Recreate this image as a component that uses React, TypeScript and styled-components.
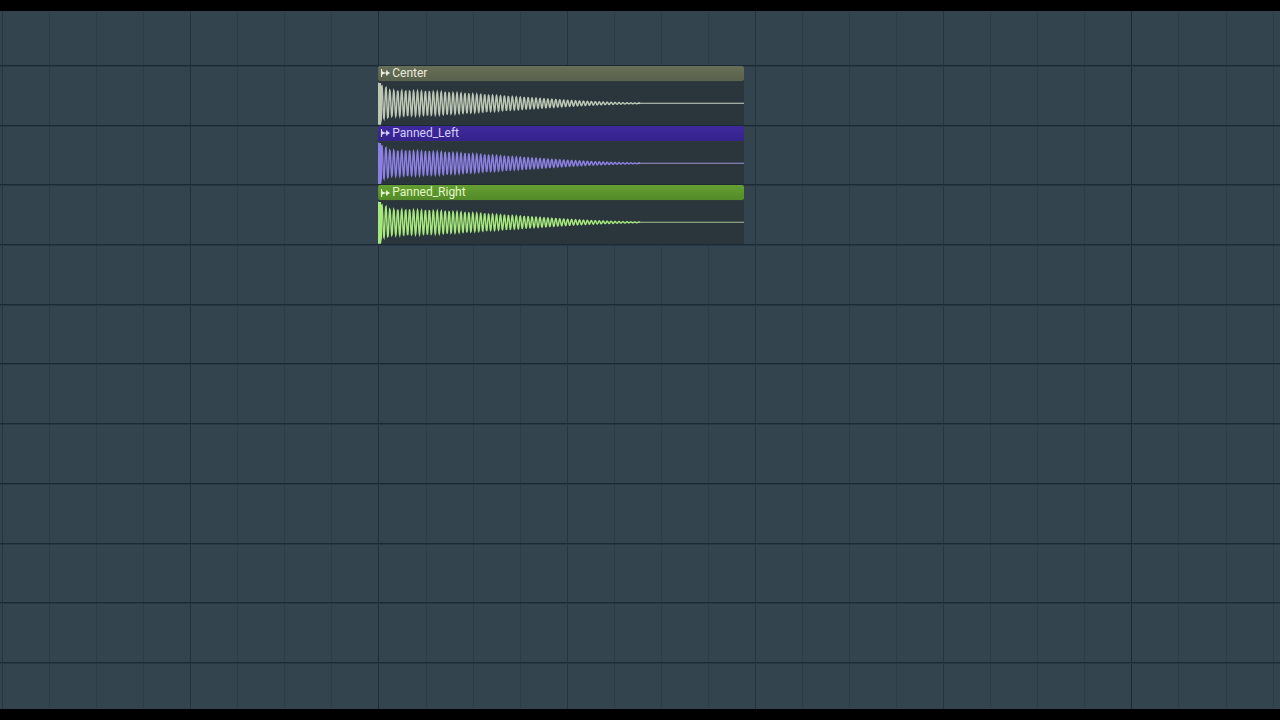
import React from "react";
import styled, { createGlobalStyle } from "styled-components";

const GlobalStyle = createGlobalStyle`
  *, *::before, *::after { box-sizing: border-box; }
  body { margin: 0; background: #000; font-family: Roboto, "Liberation Sans", sans-serif; }
`;

const Playlist = styled.main`
  display: grid;
  min-height: 100vh;
  padding: 11px 0;
  overflow: hidden;
  & > * { grid-area: 1 / 1; }
`;

const BarLines = styled.div`
  display: flex;
  min-width: 0;
  overflow: hidden;
  padding-left: 2px;
  background: #34444e;
`;

const Bar = styled.div`
  flex: 0 0 14.73%;
  display: flex;
`;

const Beat = styled.div<{ $tone: string }>`
  flex: 1;
  border-left: 1px solid ${(p) => p.$tone};
`;

const Tracks = styled.div`
  display: flex;
  flex-direction: column;
  min-width: 0;
`;

const Track = styled.section<{ $grow: number }>`
  display: flex;
  flex-direction: column;
  flex: ${(p) => p.$grow} 1 0;
  min-height: 0;
  border-bottom: 1px solid #1b2a33;
  box-shadow: 0 1px 0 #293842;
  padding-left: 29.55%;
  &:last-child {
    border-bottom: 0;
    box-shadow: none;
  }
`;

const Clip = styled.article`
  display: flex;
  flex-direction: column;
  flex: 1;
  min-height: 0;
  width: 40.6%;
  background: #2a353c;
`;

const ClipHeader = styled.header<{ $from: string; $to: string; $ink: string }>`
  display: flex;
  align-items: center;
  gap: 2px;
  height: 16px;
  padding-left: 2px;
  border-radius: 2px;
  border-bottom: 1px solid #2f3a3a;
  background: linear-gradient(${(p) => p.$from}, ${(p) => p.$to}) padding-box;
  color: ${(p) => p.$ink};
`;

const ClipName = styled.h2`
  margin: 0;
  font-size: 12px;
  font-weight: 400;
  line-height: 15px;
`;

const Wave = styled.svg`
  display: block;
  flex: 1;
  width: 100%;
  min-height: 0;
`;

type ClipData = { name: string; from: string; to: string; ink: string; wave: string; tail: string };

const clips: ClipData[] = [
  { name: "Center", from: "#686f58", to: "#58614c", ink: "#e9ecdf", wave: "#bcc8b4", tail: "#cbd4c8" },
  { name: "Panned_Left", from: "#3e2a9c", to: "#35228c", ink: "#d6d0fa", wave: "#8d80e4", tail: "#9a94cf" },
  { name: "Panned_Right", from: "#659f32", to: "#528b28", ink: "#e3f6c8", wave: "#a6e87c", tail: "#a5c190" },
];

const envelope: [number, number][] = [
  [0, 21], [3, 20], [5, 15], [8, 16], [12, 13], [60, 11.5], [100, 9],
  [130, 7], [160, 5], [190, 3], [220, 1.5], [250, 0.5], [280, 0], [366, 0],
];

const amplitudeAt = (x: number) => {
  const i = Math.max(1, envelope.findIndex(([px]) => px >= x));
  const [x0, a0] = envelope[i - 1];
  const [x1, a1] = envelope[i];
  return a0 + ((a1 - a0) * (x - x0)) / (x1 - x0);
};

const wavePath = () => {
  const points: string[] = [];
  for (let x = 0; x <= 262; x += 0.25) {
    const y = 21.5 - amplitudeAt(x) * Math.cos((x / 3.95) * Math.PI * 2);
    points.push(`${x.toFixed(2)} ${y.toFixed(2)}`);
  }
  return `M${points.join("L")}`;
};

const WAVE = wavePath();

const ClipIcon = () => (
  <svg width="10" height="10" viewBox="0 0 10 10" aria-hidden="true">
    <path d="M1.5 1v8M1 5h8.5M6.8 2.4v5.2" stroke="currentColor" strokeWidth="1.2" fill="none" />
    <path d="M1 2.5L5 5 1 7.5zM6.3 2.4L9.8 5 6.3 7.6z" fill="currentColor" />
  </svg>
);

const AudioClip = ({ clip }: { clip: ClipData }) => (
  <Clip>
    <ClipHeader $from={clip.from} $to={clip.to} $ink={clip.ink}>
      <ClipIcon />
      <ClipName>{clip.name}</ClipName>
    </ClipHeader>
    <Wave viewBox="0 0 366 43" preserveAspectRatio="none" aria-hidden="true">
      <path d="M0 1h3l1 18v18l-1 6H0z" fill={clip.wave} />
      <path d={WAVE} fill="none" stroke={clip.wave} strokeWidth="1.5" />
      <path d="M260 21.5H366" stroke={clip.tail} strokeWidth="1" shapeRendering="crispEdges" />
    </Wave>
  </Clip>
);

const trackSizes = [55, 60, 60, 60, 60, 60, 60, 60, 60, 60, 60, 47];
const barTones = ["#26353f", "#22313b", "#1f2e38", "#26353f", "#26353f", "#26353f", "#1b2a34"];

export default function App() {
  return (
    <>
      <GlobalStyle />
      <Playlist>
        <BarLines aria-hidden="true">
          {barTones.map((tone, i) => (
            <Bar key={i}>
              <Beat $tone={tone} />
              <Beat $tone="#2d3c46" />
              <Beat $tone="#2d3c46" />
              <Beat $tone="#2d3c46" />
            </Bar>
          ))}
        </BarLines>
        <Tracks>
          {trackSizes.map((size, i) => (
            <Track key={i} $grow={size}>
              {clips[i - 1] && <AudioClip clip={clips[i - 1]} />}
            </Track>
          ))}
        </Tracks>
      </Playlist>
    </>
  );
}
